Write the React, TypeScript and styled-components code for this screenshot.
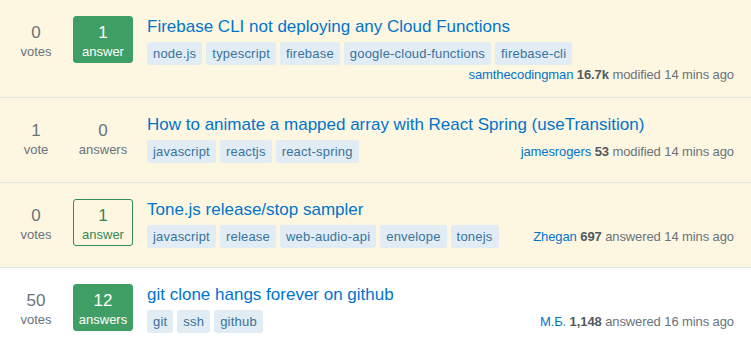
import { createGlobalStyle, styled } from 'styled-components';

const GlobalStyle = createGlobalStyle`
  html, body {
    margin: 0;
    padding: 0;
    background: #ffffff;
  }
  body {
    font-family: 'Liberation Sans', Arial, sans-serif;
    -webkit-font-smoothing: antialiased;
  }
`;

interface Question {
  votes: number;
  answers: number;
  accepted: boolean;
  title: string;
  tags: string[];
  user: string;
  rep: string;
  action: string;
  time: string;
  watched: boolean;
}

const questions: Question[] = [
  {
    votes: 0,
    answers: 1,
    accepted: true,
    title: 'Firebase CLI not deploying any Cloud Functions',
    tags: ['node.js', 'typescript', 'firebase', 'google-cloud-functions', 'firebase-cli'],
    user: 'samthecodingman',
    rep: '16.7k',
    action: 'modified',
    time: '14 mins ago',
    watched: true,
  },
  {
    votes: 1,
    answers: 0,
    accepted: false,
    title: 'How to animate a mapped array with React Spring (useTransition)',
    tags: ['javascript', 'reactjs', 'react-spring'],
    user: 'jamesrogers',
    rep: '53',
    action: 'modified',
    time: '14 mins ago',
    watched: true,
  },
  {
    votes: 0,
    answers: 1,
    accepted: false,
    title: 'Tone.js release/stop sampler',
    tags: ['javascript', 'release', 'web-audio-api', 'envelope', 'tonejs'],
    user: 'Zhegan',
    rep: '697',
    action: 'answered',
    time: '14 mins ago',
    watched: true,
  },
  {
    votes: 50,
    answers: 12,
    accepted: true,
    title: 'git clone hangs forever on github',
    tags: ['git', 'ssh', 'github'],
    user: 'М.Б.',
    rep: '1,148',
    action: 'answered',
    time: '16 mins ago',
    watched: false,
  },
];

const List = styled.div`
  width: 751px;
`;

const Row = styled.div<{ $watched: boolean }>`
  display: flex;
  box-sizing: border-box;
  min-height: 85px;
  padding: 16px 17px 13px 8px;
  background-color: ${(p) => (p.$watched ? '#fdf7e2' : '#ffffff')};
  border-bottom: 1px solid #e3e6e8;
`;

const Stats = styled.div`
  display: flex;
  align-items: flex-start;
  gap: 9px;
  margin-right: 14px;
  flex-shrink: 0;
`;

const Votes = styled.div`
  width: 56px;
  display: flex;
  flex-direction: column;
  align-items: center;
  color: #6a737c;
  padding-top: 6px;
`;

const Count = styled.span`
  font-size: 17px;
  line-height: 21px;
`;

const Label = styled.span`
  font-size: 13px;
  line-height: 17px;
`;

const AnswerBox = styled.div<{ $state: 'accepted' | 'answered' | 'none' }>`
  box-sizing: border-box;
  width: 60px;
  height: 47px;
  padding-top: 5px;
  display: flex;
  flex-direction: column;
  align-items: center;
  border-radius: 3px;
  border: 1px solid
    ${(p) =>
      p.$state === 'accepted' ? '#3f9e63' : p.$state === 'answered' ? '#348c5a' : 'transparent'};
  background-color: ${(p) => (p.$state === 'accepted' ? '#3f9e63' : 'transparent')};
  color: ${(p) =>
    p.$state === 'accepted' ? '#ffffff' : p.$state === 'answered' ? '#2f8a56' : '#6a737c'};
`;

const Summary = styled.div`
  flex: 1;
  min-width: 0;
`;

const Title = styled.a`
  display: block;
  font-size: 17px;
  line-height: 21px;
  color: #0074cc;
  text-decoration: none;
  margin-bottom: 5px;
`;

const Meta = styled.div`
  display: flex;
  flex-wrap: wrap;
  align-items: center;
  justify-content: space-between;
`;

const Tags = styled.div`
  display: flex;
  gap: 4px;
`;

const Tag = styled.a`
  display: inline-block;
  font-size: 13px;
  letter-spacing: 0.2px;
  line-height: 15px;
  padding: 4px 6px;
  border-radius: 3px;
  background-color: #e1ecf4;
  color: #39739d;
  text-decoration: none;
`;

const UserCard = styled.div`
  margin-left: auto;
  font-size: 13px;
  letter-spacing: -0.1px;
  line-height: 19px;
  color: #6a737c;
  white-space: nowrap;
`;

const UserName = styled.a`
  color: #0074cc;
  text-decoration: none;
`;

const Rep = styled.span`
  font-weight: bold;
  color: #525960;
`;

const App = () => {
  return (
    <>
      <GlobalStyle />
      <List>
        {questions.map((q) => (
          <Row key={q.title} $watched={q.watched}>
            <Stats>
              <Votes>
                <Count>{q.votes}</Count>
                <Label>{q.votes === 1 ? 'vote' : 'votes'}</Label>
              </Votes>
              <AnswerBox
                $state={q.answers === 0 ? 'none' : q.accepted ? 'accepted' : 'answered'}
              >
                <Count>{q.answers}</Count>
                <Label>{q.answers === 1 ? 'answer' : 'answers'}</Label>
              </AnswerBox>
            </Stats>
            <Summary>
              <Title href="#">{q.title}</Title>
              <Meta>
                <Tags>
                  {q.tags.map((t) => (
                    <Tag key={t} href="#">
                      {t}
                    </Tag>
                  ))}
                </Tags>
                <UserCard>
                  <UserName href="#">{q.user}</UserName> <Rep>{q.rep}</Rep> {q.action}{' '}
                  {q.time}
                </UserCard>
              </Meta>
            </Summary>
          </Row>
        ))}
      </List>
    </>
  );
};

export default App;
